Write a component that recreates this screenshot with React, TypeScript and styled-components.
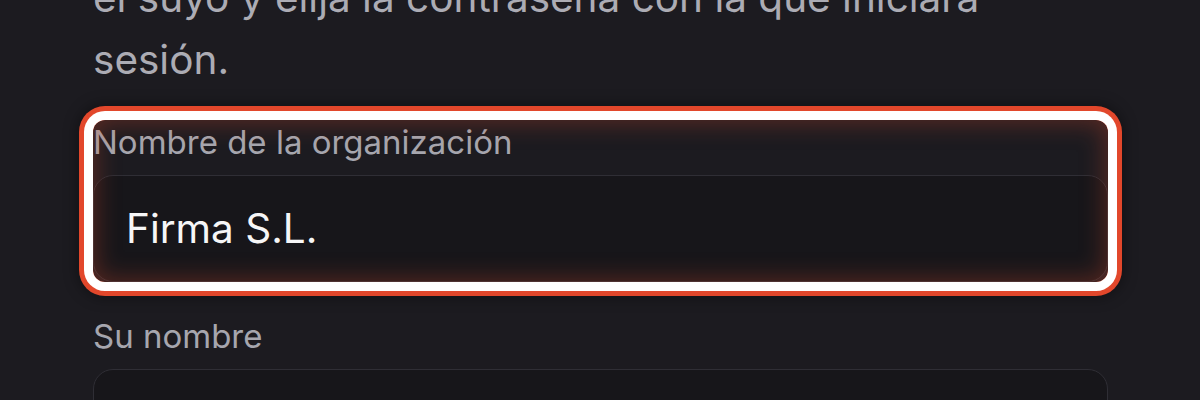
import React from 'react';
import { createGlobalStyle, styled } from 'styled-components';

const GlobalStyle = createGlobalStyle`
  html, body {
    margin: 0;
    padding: 0;
    background: #1c1b20;
    overflow: hidden;
  }
  body {
    font-family: Inter, "Noto Sans", "Liberation Sans", sans-serif;
  }
`;

const Page = styled.div`
  width: 1200px;
  height: 400px;
  overflow: hidden;
  background: #1c1b20;
  padding: 0 92px 0 93px;
  box-sizing: border-box;
`;

const Intro = styled.p`
  margin: -33px 0 29px;
  max-width: 920px;
  font-size: 40.5px;
  line-height: 62px;
  color: #acacb4;
`;

const Field = styled.div<{ $highlight?: boolean }>`
  position: relative;
  display: flex;
  flex-direction: column;
  gap: 11px;
  margin-bottom: 32px;
  border-radius: 12px;
  ${({ $highlight }) =>
    $highlight &&
    `
    box-shadow: 0 0 0 9px #ffffff, 0 0 0 14px #e2472b, 0 0 14px 16px rgba(0, 0, 0, 0.35);

    &::after {
      content: '';
      position: absolute;
      inset: 0;
      border-radius: 12px;
      pointer-events: none;
      box-shadow: inset 0 0 24px 3px rgba(214, 74, 44, 0.34);
    }
  `}
`;

const Label = styled.label`
  font-size: 33px;
  line-height: 44px;
  color: #a6a6ae;
`;

const Input = styled.input`
  box-sizing: border-box;
  width: 100%;
  height: 107px;
  padding: 0 32px;
  border: 1.5px solid #2f2e35;
  border-radius: 20px;
  background: #17161a;
  color: #f6f6f7;
  font-family: inherit;
  font-size: 40.5px;
  outline: none;
`;

export default function App() {
  return (
    <>
      <GlobalStyle />
      <Page>
        <Intro>el suyo y elija la contraseña con la que iniciará sesión.</Intro>
        <Field $highlight>
          <Label htmlFor="org">Nombre de la organización</Label>
          <Input id="org" defaultValue="Firma S.L." />
        </Field>
        <Field>
          <Label htmlFor="name">Su nombre</Label>
          <Input id="name" defaultValue="" />
        </Field>
      </Page>
    </>
  );
}
